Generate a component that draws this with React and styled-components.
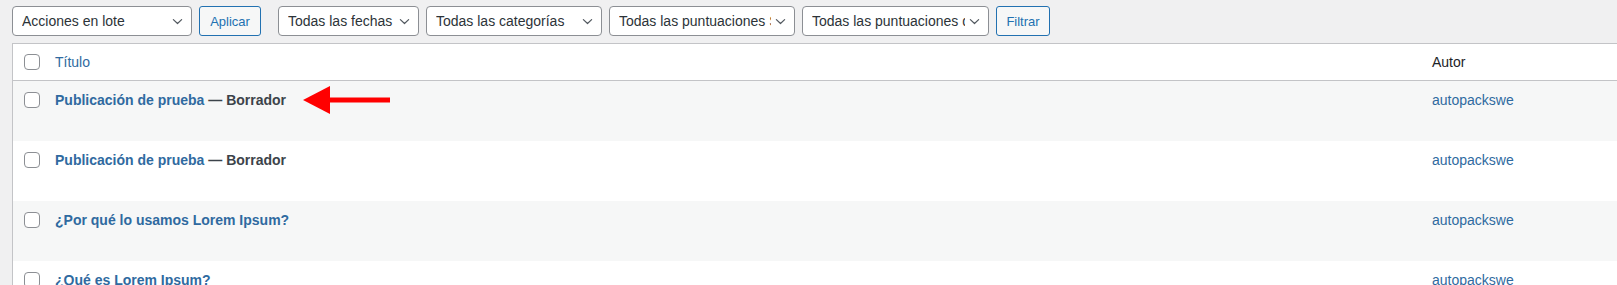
import React from "react";
import styled, { createGlobalStyle } from "styled-components";

const Global = createGlobalStyle`
  html, body { margin: 0; padding: 0; background: #f0f0f1; overflow: hidden; }
  body { font-family: "Liberation Sans", Arial, sans-serif; color: #2c3338; }
`;

const Page = styled.div`
  padding: 6px 0 0 12px;
  width: 1640px;
`;

const Toolbar = styled.div`
  display: flex;
  align-items: center;
  height: 30px;
`;

const Group = styled.div`
  display: flex;
  gap: 7px;
  margin-right: ${(p) => p.$mr || 0}px;
`;

const Select = styled.div`
  box-sizing: border-box;
  width: ${(p) => p.$w}px;
  height: 30px;
  border: 1px solid #8c8f94;
  border-radius: 4px;
  background: #fff;
  display: flex;
  align-items: center;
  padding: 0 6px 0 9px;
  font-size: 14px;
  color: #2c3338;
  gap: 4px;
`;

const SelectText = styled.span`
  flex: 1;
  overflow: hidden;
  white-space: nowrap;
`;

const Button = styled.div`
  box-sizing: border-box;
  width: ${(p) => p.$w}px;
  height: 30px;
  border: 1px solid #2271b1;
  border-radius: 3px;
  background: #f6f7f7;
  color: #2271b1;
  font-size: 13px;
  display: flex;
  align-items: center;
  justify-content: center;
`;

const Table = styled.div`
  margin-top: 7px;
  border: 1px solid #c3c4c7;
  border-right: none;
  background: #fff;
`;

const Row = styled.div`
  position: relative;
  display: grid;
  grid-template-columns: 42px 1377px 1fr;
  height: ${(p) => (p.$head ? 36 : 60)}px;
  align-items: ${(p) => (p.$head ? "center" : "start")};
  background: ${(p) => (p.$alt ? "#f6f7f7" : "#fff")};
  border-bottom: ${(p) => (p.$head ? "1px solid #c3c4c7" : "none")};
  box-sizing: content-box;
`;

const CheckCell = styled.div`
  display: flex;
  justify-content: flex-start;
  padding-left: 11px;
  padding-top: ${(p) => (p.$head ? 0 : 11)}px;
`;

const Check = styled.span`
  box-sizing: border-box;
  width: 16px;
  height: 16px;
  border: 1px solid #8c8f94;
  border-radius: 4px;
  background: #fff;
  display: block;
`;

const TitleCell = styled.div`
  font-size: 14px;
  line-height: 20px;
  padding-top: ${(p) => (p.$head ? 0 : 9)}px;
  color: #50575e;
  font-weight: ${(p) => (p.$head ? 400 : 700)};
`;

const Link = styled.span`
  color: #2f6aa0;
`;

const State = styled.span`
  color: #3c434a;
`;

const AuthorCell = styled.div`
  font-size: 14px;
  line-height: 20px;
  padding-top: ${(p) => (p.$head ? 0 : 9)}px;
  color: ${(p) => (p.$head ? "#1d2327" : "#2f6aa0")};
`;

const Arrow = styled.svg`
  position: absolute;
  left: 278px;
  top: 4px;
`;

const ChevronIcon = styled.svg`
  flex: none;
  margin-right: 2px;
`;

const Chevron = () => (
  <ChevronIcon width="11" height="11" viewBox="0 0 12 12" fill="none">
    <path d="M1.5 4 L6 8.2 L10.5 4" stroke="#50575e" strokeWidth="1.3" strokeLinecap="round" strokeLinejoin="round" />
  </ChevronIcon>
);

const Sel = ({ w, children }) => (
  <Select $w={w}>
    <SelectText>{children}</SelectText>
    <Chevron />
  </Select>
);

const rows = [
  { title: "Publicación de prueba", state: "Borrador", arrow: true },
  { title: "Publicación de prueba", state: "Borrador" },
  { title: "¿Por qué lo usamos Lorem Ipsum?" },
  { title: "¿Qué es Lorem Ipsum?" },
];

export default function App() {
  return (
    <Page>
      <Global />
      <Toolbar>
        <Group $mr={17}>
          <Sel w={180}>Acciones en lote</Sel>
          <Button $w={62}>Aplicar</Button>
        </Group>
        <Group>
          <Sel w={141}>Todas las fechas</Sel>
          <Sel w={176}>Todas las categorías</Sel>
          <Sel w={186}>Todas las puntuaciones SEO</Sel>
          <Sel w={187}>Todas las puntuaciones de legibilidad</Sel>
          <Button $w={54}>Filtrar</Button>
        </Group>
      </Toolbar>
      <Table>
        <Row $head>
          <CheckCell $head><Check /></CheckCell>
          <TitleCell $head><Link>Título</Link></TitleCell>
          <AuthorCell $head>Autor</AuthorCell>
        </Row>
        {rows.map((r, i) => (
          <Row key={i} $alt={i % 2 === 0}>
            <CheckCell><Check /></CheckCell>
            <TitleCell>
              <Link>{r.title}</Link>
              {r.state && <State> — {r.state}</State>}
            </TitleCell>
            <AuthorCell>autopackswe</AuthorCell>
            {r.arrow && (
              <Arrow width="102" height="32" viewBox="0 0 102 32">
                <polygon points="12,15 39,1 39,29" fill="#f00" />
                <rect x="36" y="12.5" width="63" height="5" fill="#f00" />
              </Arrow>
            )}
          </Row>
        ))}
      </Table>
    </Page>
  );
}
